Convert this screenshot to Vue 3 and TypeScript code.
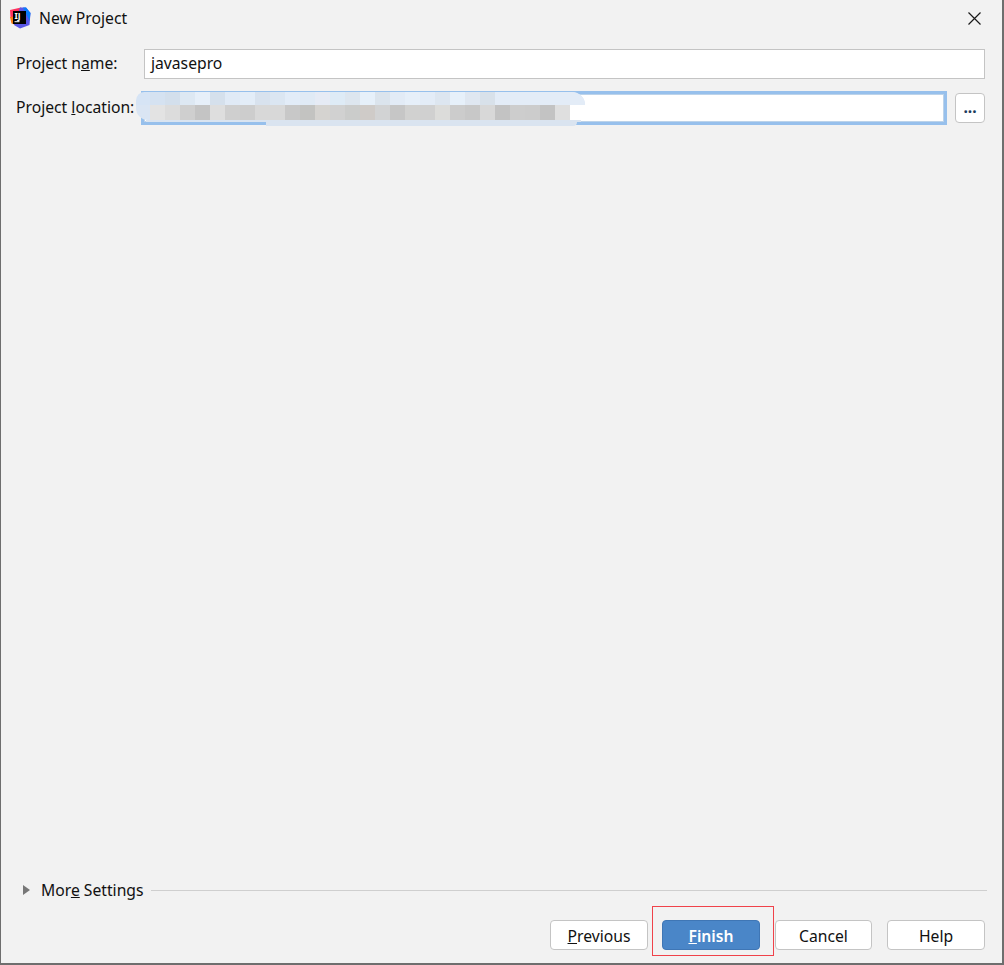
<template>
  <div class="dialog">
    <div class="title-bar">
      <svg class="app-icon" width="22" height="22" viewBox="0 0 22 22">
        <path d="M1 3 L12 0.5 L14 12 L1.5 11 Z" fill="#fe315d" />
        <path d="M1 10 L7 9.5 L7 18 L2.5 16.5 Z" fill="#f97a12" />
        <path d="M11 0.5 L17 0.5 L21.5 6 L20.5 18 L11 21.5 L5 18 Z" fill="#5a57e6" />
        <path d="M14 0.5 L17 0.5 L21.5 6 L20.5 14 Z" fill="#087cfa" />
        <rect x="4" y="4" width="13" height="13" fill="#000" />
        <text x="5.5" y="12" class="icon-text">IJ</text>
        <rect x="5.5" y="14.2" width="5" height="1" fill="#fff" />
      </svg>
      <span class="title">New Project</span>
      <svg class="close" width="13" height="13" viewBox="0 0 13 13">
        <path d="M0.5 0.5 L12.5 12.5 M12.5 0.5 L0.5 12.5" stroke="#1a1a1a" stroke-width="1.2" fill="none" />
      </svg>
    </div>

    <div class="form">
      <div class="row">
        <label class="label">Project n<u>a</u>me:</label>
        <div class="input">javasepro</div>
      </div>
      <div class="row">
        <label class="label">Project <u>l</u>ocation:</label>
        <div class="input focused"></div>
        <div class="browse"><span>...</span></div>
        <div class="mosaic">
          <div class="mosaic-row row-blue">
            <i v-for="(c, i) in blueCells" :key="i" :style="{ background: c }"></i>
          </div>
          <div class="mosaic-row row-gray">
            <i v-for="(c, i) in grayCells" :key="i" :style="{ background: c }"></i>
          </div>
          <div class="band-bottom"></div>
          <div class="band-tail"></div>
        </div>
      </div>
    </div>

    <div class="spacer"></div>

    <div class="more">
      <span class="arrow"></span>
      <span class="more-label">Mor<u>e</u> Settings</span>
      <span class="more-line"></span>
    </div>

    <div class="actions">
      <button class="btn"><u>P</u>revious</button>
      <div class="highlight">
        <button class="btn primary"><u>F</u>inish</button>
      </div>
      <button class="btn cancel">Cancel</button>
      <button class="btn help">Help</button>
    </div>
  </div>
</template>

<script setup lang="ts">
const blueCells: string[] = [
  '#d5e2f1', '#d3dfec', '#dde8f3', '#e6eff9', '#d5e0ec', '#e0eaf6', '#e3edf8', '#d8e2ee',
  '#dbe6f2', '#e2ecf8', '#e0eaf5', '#e6ebf5', '#deebf6', '#dde6ef', '#e6f0fa', '#dbe4ed',
  '#e2ebf6', '#e6eff9', '#e3ecf7', '#dde6f0', '#e6f0fa', '#dfe7f1', '#d8e1ea', '#e3ecf7',
  '#e3ecf7', '#e3ecf7', '#e3ecf7', '#e3ecf7', '#e3ecf7',
]
const grayCells: string[] = [
  '#e3e3e3', '#dcdcdc', '#cfcfcf', '#c4c4c4', '#dedede', '#cfcfcf', '#cdcdcd', '#d8d8d8',
  '#d8d8d8', '#c8c8c8', '#c3c3c1', '#d5d3d0', '#d1d1d1', '#cbcccb', '#cfcbc8', '#d2d3d4',
  '#c6c6c6', '#d1d1d0', '#d0d0d0', '#dcdcda', '#cccccc', '#c8c8c8', '#d8d8d8', '#c3c3c3',
  '#cdcdcd', '#cccccc', '#c3c3c3', '#dfdfdf',
]
</script>

<style scoped>
.dialog {
  box-sizing: border-box;
  width: 1004px;
  height: 965px;
  display: flex;
  flex-direction: column;
  background: #f2f2f2;
  border-left: 1px solid #6e6e6e;
  border-right: 2px solid #6e6e6e;
  border-bottom: 2px solid #6e6e6e;
  font-family: "Noto Sans", "Open Sans", sans-serif;
  font-size: 15.7px;
  color: #111;
}

.title-bar {
  display: flex;
  align-items: center;
  height: 36px;
  padding: 0 21px 0 8px;
}

.app-icon {
  margin-right: 8px;
}

.icon-text {
  font-size: 8.5px;
  font-weight: 700;
  fill: #fff;
}

.title {
  flex: 1;
}

.form {
  display: flex;
  flex-direction: column;
  gap: 14px;
  padding: 13px 17px 0 15px;
}

.row {
  display: flex;
  align-items: center;
  height: 30px;
  position: relative;
}

.label {
  width: 128px;
  flex: none;
  padding-bottom: 2px;
  white-space: nowrap;
}

.input {
  box-sizing: border-box;
  flex: 1;
  height: 30px;
  padding-left: 6px;
  line-height: 27px;
  background: #fff;
  border: 1px solid #c4c4c4;
}

.input.focused {
  flex: none;
  width: 800px;
  height: 28px;
  margin-right: 11px;
  border: 1px solid #bcd3ea;
  outline: 3px solid #97c0ec;
}

.browse {
  box-sizing: border-box;
  width: 30px;
  height: 30px;
  display: flex;
  align-items: center;
  justify-content: center;
  background: #fff;
  border: 1px solid #c4c4c4;
  border-radius: 4px;
}

.browse span {
  font-weight: 700;
  line-height: 1;
  color: #1b3a5c;
}

/* redaction painted over the location field */
.mosaic {
  position: absolute;
  left: 120px;
  top: -1px;
  width: 449px;
}

.mosaic-row {
  display: flex;
  padding-left: 14px;
  overflow: hidden;
}

.mosaic-row i {
  display: block;
  flex: none;
  width: 15px;
}

.row-blue {
  height: 13px;
  background: #d6e4f5;
  border-radius: 13px 20px 0 0;
}

.row-gray {
  width: 420px;
  height: 15px;
  background: #dae5f3;
  border-radius: 0 0 0 12px;
}

.band-bottom {
  width: 435px;
  height: 2px;
  margin-left: 10px;
  background: #dae4f0;
}

.band-tail {
  width: 311px;
  height: 4px;
  margin-left: 130px;
  background: #dae4f0;
  border-radius: 0 0 8px 0;
}

.spacer {
  flex: 1;
}

.more {
  display: flex;
  align-items: center;
  height: 24px;
  margin-bottom: 4px;
  padding: 0 15px 0 22px;
}

.arrow {
  width: 0;
  height: 0;
  border-left: 7px solid #777;
  border-top: 5px solid transparent;
  border-bottom: 5px solid transparent;
  margin-right: 11px;
}

.more-label {
  margin-right: 7px;
  white-space: nowrap;
}

.more-line {
  flex: 1;
  height: 1px;
  background: #cfcfcf;
}

.actions {
  display: flex;
  justify-content: flex-end;
  align-items: flex-start;
  height: 57px;
  padding-right: 17px;
}

.btn {
  box-sizing: border-box;
  width: 98px;
  height: 30px;
  margin-top: 14px;
  padding: 2px 0 0;
  font: inherit;
  color: #111;
  background: #fff;
  border: 1px solid #c4c4c4;
  border-radius: 4px;
}

.cancel {
  width: 97px;
}

.help {
  margin-left: 15px;
}

.highlight {
  box-sizing: border-box;
  width: 122px;
  height: 50px;
  padding-left: 9px;
  margin: 0 1px 0 4px;
  border: 1px solid #f0424a;
}

.highlight .btn {
  margin-top: 13px;
}

.primary {
  color: #fff;
  font-weight: 600;
  background: #4a86c8;
  border-color: #3f76b5;
}
</style>

<style>
html,
body {
  margin: 0;
  background: #f2f2f2;
}
</style>
